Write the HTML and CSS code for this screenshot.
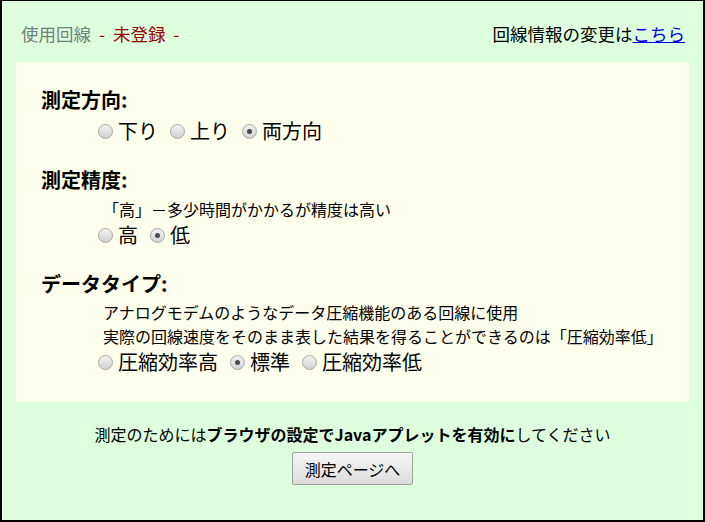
FILE: index.html
```html
<!DOCTYPE html>
<html lang="ja">
<head>
<meta charset="utf-8">
<title>回線速度測定</title>
<link rel="stylesheet" href="styles.css">
</head>
<body>
<div class="frame">
  <div class="topbar">
    <div class="line-status"><span class="label">使用回線</span><span class="status"> - 未登録 -</span></div>
    <div class="change">回線情報の変更は<a href="#">こちら</a></div>
  </div>

  <div class="panel">
    <section class="group">
      <h3 class="title">測定方向:</h3>
      <div class="options">
        <label class="opt"><span class="radio"></span>下り</label>
        <label class="opt"><span class="radio"></span>上り</label>
        <label class="opt"><span class="radio checked"></span>両方向</label>
      </div>
    </section>

    <section class="group">
      <h3 class="title">測定精度:</h3>
      <p class="desc">「高」－多少時間がかかるが精度は高い</p>
      <div class="options">
        <label class="opt"><span class="radio"></span>高</label>
        <label class="opt"><span class="radio checked"></span>低</label>
      </div>
    </section>

    <section class="group">
      <h3 class="title tight">データタイプ:</h3>
      <p class="desc">アナログモデムのようなデータ圧縮機能のある回線に使用</p>
      <p class="desc">実際の回線速度をそのまま表した結果を得ることができるのは「圧縮効率低」</p>
      <div class="options">
        <label class="opt"><span class="radio"></span>圧縮効率高</label>
        <label class="opt"><span class="radio checked"></span>標準</label>
        <label class="opt"><span class="radio"></span>圧縮効率低</label>
      </div>
    </section>
  </div>

  <div class="footer">
    <p class="note">測定のためには<b>ブラウザの設定でJavaアプレットを有効に</b>してください</p>
    <button class="go" type="button">測定ページへ</button>
  </div>
</div>
</body>
</html>
```

FILE: styles.css
```css
html, body {
  margin: 0;
  padding: 0;
}

body {
  font-family: "Noto Sans CJK JP", "Noto Sans", sans-serif;
  color: #000;
  background: #ddffdd;
}

.frame {
  box-sizing: border-box;
  width: 705px;
  height: 522px;
  background: #ddffdd;
  border: 2px solid #000;
  border-top-width: 1px;
  padding: 0 14px;
}

.topbar {
  display: flex;
  justify-content: space-between;
  align-items: center;
  font-size: 17.5px;
  line-height: 26px;
  padding: 20px 4px 0 5px;
  margin-bottom: 15px;
}

.line-status {
  word-spacing: 4px;
}

.line-status .label {
  color: #708080;
}

.line-status .status {
  color: #990000;
}

.change a {
  color: #0000ee;
  text-decoration: underline;
}

.panel {
  background: #ffffee;
  padding: 24px 25px 26px;
}

.group + .group {
  margin-top: 21px;
}

.title {
  margin: 0 0 3px;
  font-size: 20px;
  line-height: 28px;
  font-weight: bold;
}

.title.tight {
  margin-bottom: 2px;
}

.desc {
  margin: 0 0 0 62px;
  font-size: 16px;
  line-height: 24px;
}

.options {
  display: flex;
  align-items: center;
  margin-left: 57px;
  font-size: 20px;
  line-height: 28px;
}

.opt {
  display: inline-flex;
  align-items: center;
  gap: 5px;
  margin-right: 12px;
}

.radio {
  box-sizing: border-box;
  width: 15px;
  height: 15px;
  border-radius: 50%;
  border: 1px solid #a8a8a8;
  background: linear-gradient(#f2f2f2, #d2d2d2);
  position: relative;
}

.radio.checked::after {
  content: "";
  position: absolute;
  left: 4px;
  top: 4px;
  width: 5px;
  height: 5px;
  border-radius: 50%;
  background: #4a4a4a;
}

.footer {
  display: flex;
  flex-direction: column;
  align-items: center;
}

.note {
  margin: 20px 0 6px;
  font-size: 16px;
  line-height: 24px;
}

.note b {
  font-weight: bold;
}

.go {
  box-sizing: border-box;
  height: 33px;
  padding: 0 12px;
  font-family: inherit;
  font-size: 16px;
  color: #000;
  border: 1px solid #a0a0a0;
  border-radius: 2px;
  background: linear-gradient(#f6f6f6, #dcdcdc);
}
```
